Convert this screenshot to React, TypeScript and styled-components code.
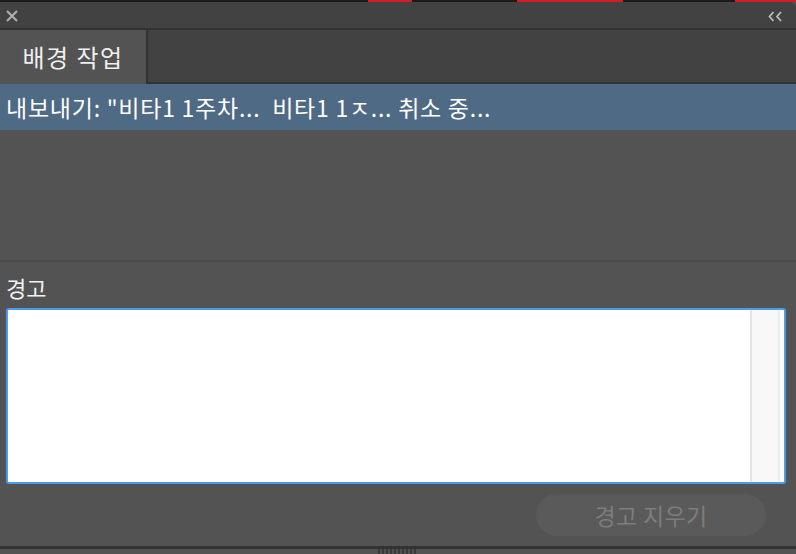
import React from "react";
import styled, { createGlobalStyle } from "styled-components";

const Global = createGlobalStyle`
  html, body { margin: 0; padding: 0; background: #535353; }
  body { font-family: "Noto Sans CJK KR", "Noto Sans", sans-serif; overflow: hidden; }
  * { box-sizing: border-box; }
`;

const Panel = styled.div`
  width: 796px;
  height: 554px;
  display: flex;
  flex-direction: column;
  background: #535353;
  overflow: hidden;
`;

const TopStrip = styled.div`
  height: 2px;
  display: flex;
  background: #1b1b1b;
  flex-shrink: 0;
`;

const StripSeg = styled.div<{ $w: number; $red?: boolean }>`
  width: ${(p) => p.$w}px;
  background: ${(p) => (p.$red ? "#d91c23" : "#1b1b1b")};
`;

const TitleBar = styled.div`
  height: 26px;
  background: #424242;
  border-top-right-radius: 6px;
  display: flex;
  align-items: center;
  justify-content: space-between;
  padding: 2px 13px 0 5px;
  flex-shrink: 0;
`;

const IconBtn = styled.div`
  display: flex;
  align-items: center;
  color: #b4b4b4;
`;

const TabRow = styled.div`
  height: 56px;
  display: flex;
  background: #333333;
  padding-top: 2px;
  flex-shrink: 0;
`;

const Tab = styled.div`
  width: 146px;
  background: #535353;
  color: #f0f0f0;
  font-size: 24px;
  letter-spacing: 1.5px;
  display: flex;
  align-items: center;
  justify-content: center;
  padding-bottom: 2px;
`;

const TabFill = styled.div`
  flex: 1;
  background: #424242;
  margin-left: 2px;
  margin-bottom: 2px;
`;

const JobRow = styled.div`
  height: 46px;
  background: #4f6a84;
  color: #ffffff;
  font-size: 23px;
  letter-spacing: 0.75px;
  display: flex;
  align-items: center;
  padding-left: 6px;
  white-space: pre;
  flex-shrink: 0;
`;

const EmptyArea = styled.div`
  height: 132px;
  border-bottom: 2px solid #4a4a4a;
  flex-shrink: 0;
`;

const WarnSection = styled.div`
  flex: 1;
  display: flex;
  flex-direction: column;
  padding: 10px 10px 0 6px;
`;

const Label = styled.div`
  color: #f2f2f2;
  font-size: 22px;
  line-height: 30px;
  padding-left: 0;
  height: 36px;
`;

const TextBox = styled.div`
  height: 176px;
  background: #ffffff;
  border: 2px solid #4a9ee8;
  border-radius: 3px;
  display: flex;
  justify-content: flex-end;
`;

const ScrollTrack = styled.div`
  width: 30px;
  background: #f8f8f8;
  border-left: 2px solid #e6e6e6;
  border-right: 2px solid #ececec;
  margin-right: 4px;
`;

const ButtonRow = styled.div`
  display: flex;
  justify-content: flex-end;
  padding: 10px 20px 0 0;
`;

const ClearButton = styled.div`
  width: 230px;
  height: 42px;
  border-radius: 21px;
  background: #5a5a5a;
  color: #7d7d7d;
  font-size: 23px;
  letter-spacing: 0.3px;
  display: flex;
  align-items: center;
  justify-content: center;
`;

const BottomBar = styled.div`
  height: 8px;
  border-top: 3px solid #333333;
  display: flex;
  justify-content: center;
  flex-shrink: 0;
  background: #535353;
`;

const Grip = styled.div`
  width: 38px;
  height: 5px;
  margin-left: -2px;
  background: repeating-linear-gradient(90deg, #3a3a3a 0 2px, #535353 2px 4px);
`;

export default function App() {
  return (
    <>
      <Global />
      <Panel>
        <TopStrip>
          <StripSeg $w={368} />
          <StripSeg $w={44} $red />
          <StripSeg $w={105} />
          <StripSeg $w={106} $red />
          <StripSeg $w={112} />
          <StripSeg $w={61} $red />
        </TopStrip>
        <TitleBar>
          <IconBtn>
            <svg width="14" height="14" viewBox="0 0 14 14">
              <path d="M2 2 L12 12 M12 2 L2 12" stroke="#b0b0b0" strokeWidth="2" />
            </svg>
          </IconBtn>
          <IconBtn>
            <svg width="15" height="11" viewBox="0 0 15 11">
              <path d="M5.5 1 L1.5 5.5 L5.5 10 M13 1 L9 5.5 L13 10" stroke="#bcbcbc" strokeWidth="1.8" fill="none" />
            </svg>
          </IconBtn>
        </TitleBar>
        <TabRow>
          <Tab>배경 작업</Tab>
          <TabFill />
        </TabRow>
        <JobRow>{'내보내기: "비타1 1주차...  비타1 1ㅈ... 취소 중...'}</JobRow>
        <EmptyArea />
        <WarnSection>
          <Label>경고</Label>
          <TextBox>
            <ScrollTrack />
          </TextBox>
          <ButtonRow>
            <ClearButton>경고 지우기</ClearButton>
          </ButtonRow>
        </WarnSection>
        <BottomBar>
          <Grip />
        </BottomBar>
      </Panel>
    </>
  );
}
